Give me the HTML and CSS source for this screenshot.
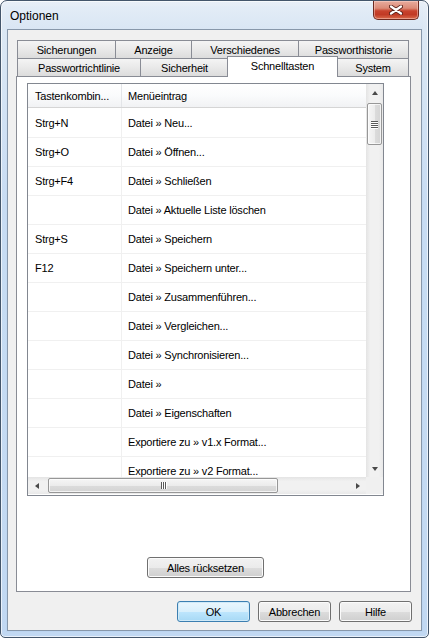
FILE: index.html
```html
<!DOCTYPE html>
<html lang="de">
<head>
<meta charset="utf-8">
<title>Optionen</title>
<link rel="stylesheet" href="styles.css">
</head>
<body>
<div class="window">
  <div class="titlebar">
    <span class="title">Optionen</span>
    <div class="close">
      <svg width="14" height="10" viewBox="0 0 14 10">
        <path d="M2 1.5 L12 8.5 M12 1.5 L2 8.5" stroke="#5a2119" stroke-width="4" stroke-linecap="round"/>
        <path d="M2 1.5 L12 8.5 M12 1.5 L2 8.5" stroke="#ffffff" stroke-width="2.2" stroke-linecap="round"/>
      </svg>
    </div>
  </div>
  <div class="client">
    <div class="tabctrl">
      <div class="tabrow">
        <div class="tab t-sich">Sicherungen</div>
        <div class="tab t-anz">Anzeige</div>
        <div class="tab t-vers">Verschiedenes</div>
        <div class="tab t-phist">Passworthistorie</div>
      </div>
      <div class="tabrow">
        <div class="tab t-prl">Passwortrichtlinie</div>
        <div class="tab t-sh">Sicherheit</div>
        <div class="tab t-sel">Schnelltasten</div>
        <div class="tab t-sys">System</div>
      </div>
      <div class="panel">
        <div class="content">
          <div class="listview">
            <div class="lv-main">
              <div class="lv-header">
                <div class="hc c1">Tastenkombin...</div>
                <div class="hc c2">Menüeintrag</div>
              </div>
              <div class="lv-body">
                <div class="row"><div class="c1">Strg+N</div><div class="c2">Datei » Neu...</div></div>
                <div class="row"><div class="c1">Strg+O</div><div class="c2">Datei » Öffnen...</div></div>
                <div class="row"><div class="c1">Strg+F4</div><div class="c2">Datei » Schließen</div></div>
                <div class="row"><div class="c1"></div><div class="c2">Datei » Aktuelle Liste löschen</div></div>
                <div class="row"><div class="c1">Strg+S</div><div class="c2">Datei » Speichern</div></div>
                <div class="row"><div class="c1">F12</div><div class="c2">Datei » Speichern unter...</div></div>
                <div class="row"><div class="c1"></div><div class="c2">Datei » Zusammenführen...</div></div>
                <div class="row"><div class="c1"></div><div class="c2">Datei » Vergleichen...</div></div>
                <div class="row"><div class="c1"></div><div class="c2">Datei » Synchronisieren...</div></div>
                <div class="row"><div class="c1"></div><div class="c2">Datei »</div></div>
                <div class="row"><div class="c1"></div><div class="c2">Datei » Eigenschaften</div></div>
                <div class="row"><div class="c1"></div><div class="c2">Exportiere zu » v1.x Format...</div></div>
                <div class="row"><div class="c1"></div><div class="c2">Exportiere zu » v2 Format...</div></div>
              </div>
            </div>
            <div class="vscroll">
              <div class="sbtn"><span class="arr up"></span></div>
              <div class="vtrack"><div class="vthumb"><span class="grip-h"></span><span class="grip-h"></span><span class="grip-h"></span><span class="grip-h"></span></div></div>
              <div class="sbtn"><span class="arr down"></span></div>
            </div>
            <div class="hscroll">
              <div class="sbtn"><span class="arr left"></span></div>
              <div class="htrack"><div class="hthumb"><span class="grip-v"></span><span class="grip-v"></span><span class="grip-v"></span></div></div>
              <div class="sbtn"><span class="arr right"></span></div>
            </div>
            <div class="corner"></div>
          </div>
          <button class="btn reset">Alles rücksetzen</button>
        </div>
      </div>
    </div>
    <div class="footer">
      <button class="btn default">OK</button>
      <button class="btn">Abbrechen</button>
      <button class="btn">Hilfe</button>
    </div>
  </div>
</div>
</body>
</html>
```
FILE: styles.css
```css
* { box-sizing: border-box; }
html, body { margin: 0; padding: 0; }
body {
  width: 429px;
  height: 638px;
  overflow: hidden;
  background: #ffffff;
  font-family: "Liberation Sans", Arial, sans-serif;
  font-size: 11px;
  letter-spacing: -0.2px;
  color: #000;
}

.window {
  width: 429px;
  height: 638px;
  border: 1px solid #44566b;
  border-radius: 7px 7px 5px 5px;
  background: linear-gradient(to bottom, #e6eef7 0px, #d9e6f4 28px, #c4daf2 200px, #bcd5f1 100%);
  box-shadow: inset 0 0 0 1px rgba(255,255,255,0.65), inset 0 0 0 5px rgba(255,255,255,0.08);
  display: flex;
  flex-direction: column;
  padding: 0 6px 6px 6px;
}

.titlebar {
  height: 28px;
  flex: none;
  display: flex;
  justify-content: space-between;
  align-items: flex-start;
}
.title {
  font-size: 12px;
  letter-spacing: 0;
  line-height: 14px;
  margin: 8px 0 0 3px;
  color: #000;
}
.close {
  width: 46px;
  height: 19px;
  margin-right: 3px;
  border: 1px solid #6e2a20;
  border-top: none;
  border-radius: 0 0 5px 5px;
  background: linear-gradient(to bottom, #e8ac9e 0%, #dc8b77 40%, #c8432d 55%, #c13a25 75%, #d96a4b 100%);
  box-shadow: inset 0 0 0 1px rgba(255,220,210,0.45);
  display: flex;
  align-items: center;
  justify-content: center;
}

.client {
  flex: 1;
  border: 1px solid #8797aa;
  background: #f0f0f0;
  display: flex;
  flex-direction: column;
  padding: 10px 10px 0 8px;
}

.tabctrl {
  width: 395px;
  display: flex;
  flex-direction: column;
}
.tabrow {
  display: flex;
  height: 18px;
  padding-left: 1px;
}
.tab {
  height: 18px;
  border: 1px solid #898c95;
  border-bottom: none;
  background: linear-gradient(to bottom, #f4f4f4 0%, #e9e9e9 50%, #dcdcdc 100%);
  display: flex;
  align-items: center;
  justify-content: center;
  padding-top: 1px;
  white-space: nowrap;
}
.tab + .tab { margin-left: -1px; }
.t-sich { width: 99px; }
.t-anz { width: 77px; }
.t-vers { width: 108px; }
.t-phist { width: 111px; }
.t-prl { width: 124px; }
.t-sh { width: 89px; }
.t-sys { width: 72px; }
.tab.t-sel {
  width: 111px;
  height: 21px;
  margin-top: -2px;
  margin-left: -2px;
  margin-bottom: -1px;
  background: #ffffff;
  z-index: 2;
  padding-top: 0;
  padding-bottom: 2px;
}

.panel {
  height: 516px;
  border: 1px solid #898c95;
  background: #ffffff;
  padding: 6px 0 0 10px;
}
.content {
  width: 357px;
  display: flex;
  flex-direction: column;
  align-items: center;
}

.listview {
  width: 357px;
  height: 413px;
  border: 1px solid #828790;
  display: grid;
  grid-template-columns: 338px 17px;
  grid-template-rows: 393px 17px;
  background: #fff;
}
.lv-main {
  overflow: hidden;
}
.lv-header {
  display: flex;
  height: 24px;
  border-bottom: 1px solid #d5d5d5;
  background: linear-gradient(to bottom, #ffffff 0%, #fafbfc 50%, #f1f2f4 100%);
}
.hc {
  display: flex;
  align-items: center;
  white-space: nowrap;
}
.lv-header .c1 { border-right: 1px solid #e3e5e8; }
.c1 { width: 94px; flex: none; padding-left: 7px; }
.c2 { padding-left: 6px; white-space: nowrap; }
.row {
  display: flex;
  height: 29px;
  border-bottom: 1px solid #f0f0f0;
}
.row:first-child { height: 30px; }
.row .c1 {
  border-right: 1px solid #f0f0f0;
  display: flex;
  align-items: center;
}
.row .c2 {
  display: flex;
  align-items: center;
}

.vscroll {
  display: flex;
  flex-direction: column;
  background: linear-gradient(to right, #e4e4e4 0%, #f1f1f1 25%, #f1f1f1 75%, #e9e9e9 100%);
}
.hscroll {
  display: flex;
  background: linear-gradient(to bottom, #e4e4e4 0%, #f1f1f1 25%, #f1f1f1 75%, #e9e9e9 100%);
}
.corner { background: #f0f0f0; }
.sbtn {
  width: 17px;
  height: 17px;
  flex: none;
  display: flex;
  align-items: center;
  justify-content: center;
}
.vtrack { flex: 1; padding: 2px 1px 0 1px; }
.htrack { flex: 1; padding: 1px 0 1px 3px; }
.vthumb {
  width: 15px;
  height: 42px;
  border: 1px solid #979797;
  border-radius: 2px;
  background: linear-gradient(to right, #f6f6f6 0%, #ececec 50%, #dcdcdc 51%, #d4d4d4 100%);
  box-shadow: inset 0 0 0 1px rgba(255,255,255,0.7);
  display: flex;
  flex-direction: column;
  align-items: center;
  justify-content: center;
  gap: 1px;
}
.grip-h {
  width: 7px;
  height: 1px;
  background: #5a5a5a;
  box-shadow: 0 1px 0 #ffffff;
}
.hthumb {
  width: 230px;
  height: 15px;
  border: 1px solid #979797;
  border-radius: 2px;
  background: linear-gradient(to bottom, #f6f6f6 0%, #ececec 50%, #dcdcdc 51%, #d4d4d4 100%);
  box-shadow: inset 0 0 0 1px rgba(255,255,255,0.7);
  display: flex;
  align-items: center;
  justify-content: center;
  gap: 1px;
}
.grip-v {
  width: 1px;
  height: 7px;
  background: #5a5a5a;
  box-shadow: 1px 0 0 #ffffff;
}
.arr { width: 0; height: 0; border: 0 solid transparent; }
.arr.up { border-width: 0 3.5px 4px 3.5px; border-bottom-color: #4a4a4a; }
.arr.down { border-width: 4px 3.5px 0 3.5px; border-top-color: #4a4a4a; }
.arr.left { border-width: 3.5px 4px 3.5px 0; border-right-color: #4a4a4a; }
.arr.right { border-width: 3.5px 0 3.5px 4px; border-left-color: #4a4a4a; }

.btn {
  font-family: "Liberation Sans", Arial, sans-serif;
  font-size: 11px;
  letter-spacing: -0.2px;
  color: #000;
  height: 21px;
  padding: 0;
  border: 1px solid #707070;
  border-radius: 3px;
  background: linear-gradient(to bottom, #f2f2f2 0%, #ebebeb 50%, #dddddd 51%, #cfcfcf 100%);
  box-shadow: inset 0 0 0 1px #fbfbfb;
}
.btn.reset {
  width: 117px;
  margin-top: 61px;
}
.btn.default {
  border-color: #3c7fb1;
  background: linear-gradient(to bottom, #eaf6fd 0%, #d9f0fc 50%, #bee6fd 51%, #a7d9f5 100%);
  box-shadow: inset 0 0 0 1px #d0eaf8;
}

.footer {
  display: flex;
  justify-content: flex-end;
  gap: 8px;
  margin-top: 9px;
  margin-right: -1px;
}
.footer .btn { width: 73px; }
```
